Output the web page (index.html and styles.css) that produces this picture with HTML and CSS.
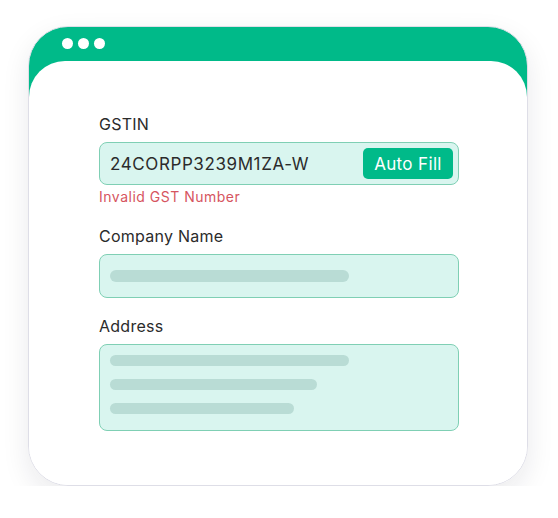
FILE: index.html
```html
<!DOCTYPE html>
<html lang="en">
<head>
<meta charset="utf-8">
<title>GST Form</title>
<link rel="stylesheet" href="styles.css">
</head>
<body>
<div class="window">
  <div class="titlebar">
    <span class="dot"></span><span class="dot"></span><span class="dot"></span>
  </div>
  <div class="content">
    <div class="field">
      <label class="label">GSTIN</label>
      <div class="input gst">
        <span class="value">24CORPP3239M1ZA-W</span>
        <button class="btn">Auto Fill</button>
      </div>
      <div class="error">Invalid GST Number</div>
    </div>
    <div class="field company">
      <label class="label">Company Name</label>
      <div class="input single">
        <span class="bar w239"></span>
      </div>
    </div>
    <div class="field address">
      <label class="label">Address</label>
      <div class="input multi">
        <span class="bar thin w239"></span>
        <span class="bar thin w207"></span>
        <span class="bar thin w184"></span>
      </div>
    </div>
  </div>
</div>
</body>
</html>
```

FILE: styles.css
```css
* { box-sizing: border-box; }
html, body { margin: 0; padding: 0; background: #ffffff; }
body {
  font-family: Inter, "Noto Sans", sans-serif;
  color: #2e2e2e;
  padding: 26px 0 0 28px;
}
.window {
  width: 500px;
  height: 460px;
  border: 1px solid #dedee7;
  border-radius: 40px;
  overflow: hidden;
  background: linear-gradient(#00ba89 0, #00ba89 100px, #ffffff 100px);
  box-shadow: 0 10px 28px rgba(20, 20, 40, 0.09);
  display: flex;
  flex-direction: column;
}
.titlebar {
  height: 34px;
  display: flex;
  gap: 5px;
  padding: 10.5px 0 0 32.5px;
}
.dot {
  width: 11px;
  height: 11px;
  border-radius: 50%;
  background: #ffffff;
}
.content {
  flex: 1;
  background: #ffffff;
  border-radius: 36px 36px 0 0;
  padding: 53px 0 0 70px;
}
.field { width: 360px; }
.label {
  display: block;
  font-size: 16px;
  line-height: 20px;
  margin-bottom: 8px;
  color: #2b2b2b;
  letter-spacing: 0.25px;
}
.input {
  width: 360px;
  background: #d9f5ef;
  border: 1px solid #7fcfb4;
  border-radius: 8px;
}
.gst {
  height: 43px;
  display: flex;
  align-items: center;
  justify-content: space-between;
  padding: 0 5px 0 10px;
}
.value {
  font-size: 17px;
  color: #2b2b2b;
  letter-spacing: 0.6px;
}
.btn {
  width: 90px;
  height: 31px;
  border: none;
  border-radius: 5px;
  background: #00ba89;
  color: #ffffff;
  font-family: Inter, "Noto Sans", sans-serif;
  font-size: 17px;
  letter-spacing: 0.35px;
  padding: 0;
}
.error {
  margin-top: 3px;
  font-size: 14px;
  line-height: 18px;
  color: #d6555f;
  letter-spacing: 0.5px;
}
.company { margin-top: 20px; }
.address { margin-top: 18px; }
.single {
  height: 44px;
  display: flex;
  align-items: center;
  padding-left: 10px;
}
.multi {
  height: 87px;
  display: flex;
  flex-direction: column;
  gap: 13px;
  padding: 10px 0 0 10px;
}
.bar {
  display: block;
  height: 12px;
  border-radius: 6px;
  background: #b9dcd5;
}
.bar.thin { height: 11px; }
.w239 { width: 239px; }
.w207 { width: 207px; }
.w184 { width: 184px; }
```
